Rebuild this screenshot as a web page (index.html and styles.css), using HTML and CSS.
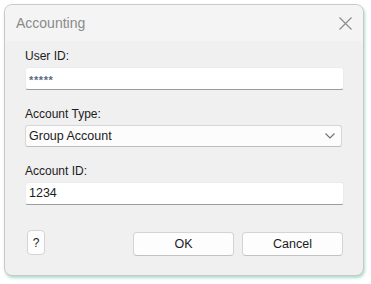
FILE: index.html
```html
<html>
    <head>
        <title>Accounting</title>
        <link rel="stylesheet" href="styles.css">
    </head>
    <body>
        <div class="window">
            <div class="titleBar">
                <span class="titleText">Accounting</span>
                <svg class="closeIcon" width="13" height="13" viewBox="0 0 13 13">
                    <path d="M0.5 0.5 L12.5 12.5 M12.5 0.5 L0.5 12.5" stroke="#8c8c8c" stroke-width="1.2" fill="none"/>
                </svg>
            </div>
            <div class="dialogBody">
                <div class="fieldLabel">User ID:</div>
                <div class="textField"><span class="masked">*****</span></div>

                <div class="fieldLabel spaced">Account Type:</div>
                <div class="selectField">
                    <span>Group Account</span>
                    <svg width="10" height="6" viewBox="0 0 10 6">
                        <path d="M0.5 0.5 L5 5 L9.5 0.5" stroke="#707070" stroke-width="1.1" fill="none"/>
                    </svg>
                </div>

                <div class="fieldLabel spaced">Account ID:</div>
                <div class="textField">1234</div>

                <div class="buttonRow">
                    <button class="helpButton">?</button>
                    <div class="mainButtons">
                        <button class="dlgButton">OK</button>
                        <button class="dlgButton">Cancel</button>
                    </div>
                </div>
            </div>
        </div>
    </body>
</html>
```

FILE: styles.css
```css
body
{
    margin: 0;
    padding: 0;
    background-color: #ffffff;
    font-family: "Liberation Sans", Arial, sans-serif;
}
.window
{
    margin: 4px 0 0 4px;
    width: 358px;
    height: 270px;
    border: 1px solid #c9c9c9;
    border-radius: 8px;
    background-color: #f0f0f0;
    box-shadow: 1px 2px 3px rgba(110, 190, 165, 0.55);
    overflow: hidden;
}
.titleBar
{
    height: 36px;
    background-color: #f4f4f4;
    display: flex;
    align-items: center;
    justify-content: space-between;
    padding: 0 11px 0 11px;
}
.titleText
{
    font-size: 14px;
    color: #8a8a8a;
}
.closeIcon
{
    margin-top: 1px;
}
.dialogBody
{
    padding: 8px 20px 0 20px;
}
.fieldLabel
{
    font-size: 12px;
    line-height: 15px;
    color: #1b1b1b;
    margin-bottom: 3px;
}
.spaced
{
    margin-top: 17px;
}
.textField
{
    height: 21px;
    width: 314px;
    background-color: #ffffff;
    border: 1px solid #ebebeb;
    border-bottom: 1px solid #9c9c9c;
    border-radius: 3px;
    font-size: 12.5px;
    line-height: 21px;
    padding-left: 3px;
    color: #1b1b1b;
}
.masked
{
    font-size: 11px;
    font-weight: bold;
    color: #5a6a82;
    letter-spacing: 0.6px;
    position: relative;
    top: 2px;
}
.selectField
{
    height: 20px;
    width: 306px;
    margin-top: 1px;
    background-color: #fcfcfc;
    border: 1px solid #d6d6d6;
    border-bottom: 1px solid #bdbdbd;
    border-radius: 3px;
    font-size: 12.5px;
    color: #1b1b1b;
    display: flex;
    align-items: center;
    justify-content: space-between;
    padding: 0 6px 0 3px;
}
.buttonRow
{
    display: flex;
    justify-content: space-between;
    align-items: flex-start;
    margin-top: 25px;
    width: 318px;
}
.helpButton
{
    width: 18px;
    height: 25px;
    margin: 0 0 0 2px;
    padding: 0;
    background-color: #fdfdfd;
    border: 1px solid #d4d4d4;
    border-radius: 4px;
    font-family: "Liberation Sans", Arial, sans-serif;
    font-size: 12px;
    color: #1b1b1b;
}
.mainButtons
{
    display: flex;
    gap: 8px;
    margin-top: 2px;
}
.dlgButton
{
    width: 101px;
    height: 24px;
    padding: 0;
    background-color: #fdfdfd;
    border: 1px solid #d4d4d4;
    border-bottom: 1px solid #c2c2c2;
    border-radius: 4px;
    font-family: "Liberation Sans", Arial, sans-serif;
    font-size: 12.5px;
    color: #1b1b1b;
}
```
